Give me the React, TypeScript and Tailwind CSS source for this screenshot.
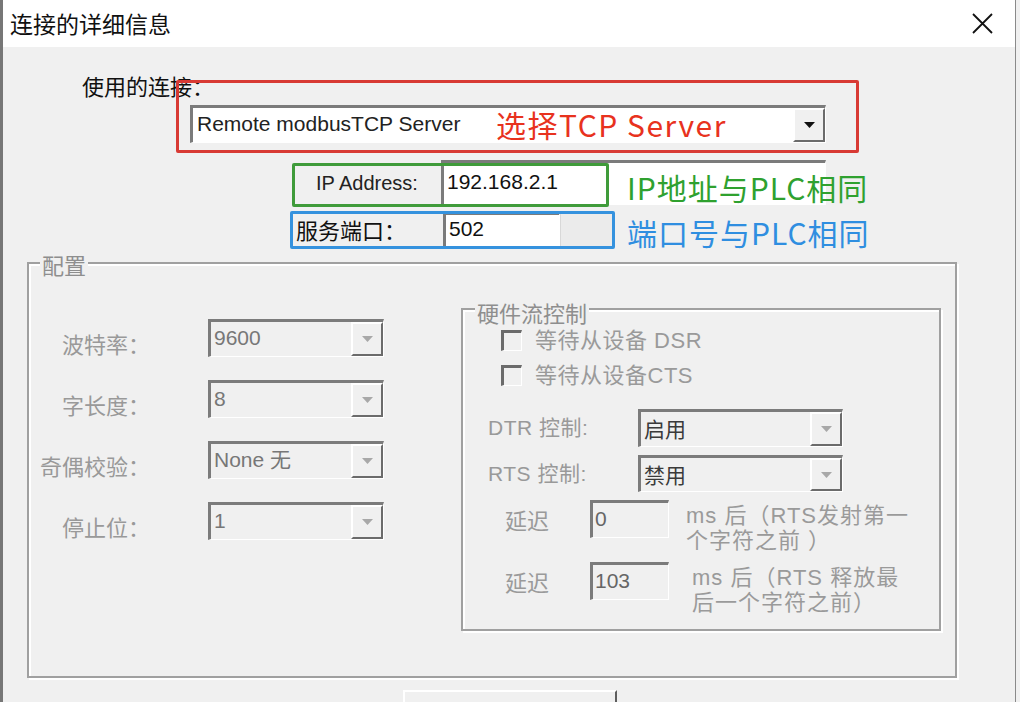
import React from 'react';

const latin = "font-['Liberation_Sans','Noto_Sans_CJK_SC',sans-serif]";

// classic sunken 3D edge used by edits and combo boxes
const sunken =
  'border-t-[3px] border-l-[3px] border-r border-b border-t-[#7b7b7b] border-l-[#7b7b7b] border-r-white border-b-white';

function Arrow({ dim }: { dim?: boolean }) {
  return (
    <div className="flex h-full w-[32px] shrink-0 items-center justify-center border-2 border-t-white border-l-white border-r-[#6b6b6b] border-b-[#6b6b6b] bg-[#f0f0f0]">
      <svg width="11" height="6" viewBox="0 0 11 6">
        <path d="M0 0 H11 L5.5 6 Z" fill={dim ? '#a8a8a8' : '#111'} />
      </svg>
    </div>
  );
}

function Combo({ text, className, textClass }: { text: string; className: string; textClass: string }) {
  return (
    <div className={`flex shrink-0 bg-[#f0f0f0] ${sunken} ${className}`}>
      <span className={`flex-1 truncate pl-[3px] text-[21px] leading-[32px] ${textClass}`}>{text}</span>
      <Arrow dim />
    </div>
  );
}

function CheckRow({ label, className }: { label: string; className?: string }) {
  return (
    <div className={`flex h-[21px] items-center pl-[38px] ${className ?? ''}`}>
      <span className="h-[21px] w-[21px] shrink-0 border-t-[3px] border-l-[3px] border-r border-b border-t-[#6b6b6b] border-l-[#6b6b6b] border-r-white border-b-white bg-[#f0f0f0]" />
      <span className={`ml-[13px] text-[22px] leading-[24px] tracking-[0.5px] text-[#9a9a9a] ${latin}`}>{label}</span>
    </div>
  );
}

function DelayRow({ value, lines, gap, className }: { value: string; lines: string[]; gap: string; className?: string }) {
  return (
    <div className={`flex items-start pl-[42px] ${className ?? ''}`}>
      <div className="flex h-[38px] items-center">
        <span className="w-[85px] text-[22px] leading-[24px] text-[#9a9a9a]">延迟</span>
        <div className={`h-[38px] w-[79px] bg-[#f0f0f0] ${sunken}`}>
          <span className={`pl-[2px] text-[21px] leading-[32px] text-[#666] ${latin}`}>{value}</span>
        </div>
      </div>
      <div className={`mt-[3px] text-[22px] leading-[25px] tracking-[1px] text-[#9a9a9a] ${latin} ${gap}`}>
        {lines.map(l => (
          <div key={l} className="whitespace-nowrap">{l}</div>
        ))}
      </div>
    </div>
  );
}

const portLabels = [
  { label: '波特率：', value: '9600' },
  { label: '字长度：', value: '8' },
  { label: '奇偶校验：', value: 'None 无' },
  { label: '停止位：', value: '1' },
];

export default function App() {
  return (
    <div className="relative flex h-[702px] w-[1020px] overflow-hidden bg-[#ececec] font-['Noto_Sans_CJK_SC',sans-serif]">
      <div className="flex w-[1016px] shrink-0 flex-col border-l-[3px] border-r border-l-[#777] border-r-[#8a8a8a] bg-[#f0f0f0]">
        {/* title bar */}
        <div className="flex h-[47px] shrink-0 items-center justify-between bg-white pl-[7px] pr-[22px]">
          <span className="text-[23px] leading-none text-[#111]">连接的详细信息</span>
          <svg width="21" height="21" viewBox="0 0 21 21">
            <path d="M1 1 L20 20 M20 1 L1 20" stroke="#111" strokeWidth="1.8" />
          </svg>
        </div>

        {/* connection */}
        <div className="ml-[79px] mt-[26px] text-[22px] leading-[24px] text-[#111]">使用的连接：</div>
        <div className={`ml-[187px] mt-[8px] flex h-[38px] w-[636px] shrink-0 bg-white ${sunken}`}>
          <span className={`flex-1 pl-[4px] text-[21px] leading-[32px] text-[#222] ${latin}`}>Remote modbusTCP Server</span>
          <Arrow />
        </div>

        {/* address */}
        <div className="ml-[310px] mt-[17px] flex h-[45px] shrink-0">
          <span className={`flex w-[128px] items-center pl-[3px] text-[20px] text-[#222] ${latin}`}>IP Address:</span>
          <div className={`w-[385px] bg-white ${sunken}`}>
            <span className={`pl-[3px] text-[21px] leading-[38px] text-[#111] ${latin}`}>192.168.2.1</span>
          </div>
        </div>
        <div className="ml-[293px] mt-[7px] flex h-[35px] shrink-0">
          <span className="flex w-[147px] items-center text-[22px] text-[#111]">服务端口：</span>
          <div className={`w-[117px] bg-white ${sunken}`}>
            <span className={`pl-[3px] text-[21px] leading-[28px] text-[#111] ${latin}`}>502</span>
          </div>
          <div className="w-[54px] border border-[#d8d8d8] bg-[#ebebeb]" />
        </div>

        {/* serial settings */}
        <div className="relative ml-[24px] mt-[15px] h-[416px] w-[930px] shrink-0 border-2 border-[#a0a0a0] shadow-[inset_2px_2px_0_#fff,2px_2px_0_#fff]">
          <span className="absolute -top-[12px] left-[11px] bg-[#f0f0f0] px-[2px] text-[22px] leading-[24px] text-[#8e8e8e]">配置</span>
          <div className="flex">
            <div className="flex flex-col gap-[23px] pt-[55px]">
              {portLabels.map(r => (
                <div key={r.label} className="flex h-[38px] items-center">
                  <span className="mt-[10px] w-[121px] text-right text-[22px] leading-[24px] text-[#999]">{r.label}</span>
                  <Combo text={r.value} className="ml-[58px] h-[38px] w-[176px]" textClass={`text-[#777] ${latin}`} />
                </div>
              ))}
            </div>

            <div className="relative ml-[77px] mt-[44px] h-[323px] w-[480px] shrink-0 border-2 border-[#a0a0a0] shadow-[inset_2px_2px_0_#fff,2px_2px_0_#fff]">
              <span className="absolute -top-[10px] left-[12px] bg-[#f0f0f0] px-[2px] text-[22px] leading-[24px] text-[#8e8e8e]">硬件流控制</span>
              <div className="flex flex-col pt-[20px]">
                <CheckRow label="等待从设备 DSR" />
                <CheckRow label="等待从设备CTS" className="mt-[14px]" />
                <div className="mt-[23px] flex h-[38px] items-center pl-[25px]">
                  <span className={`w-[150px] text-[21px] tracking-[0.5px] text-[#999] ${latin}`}>DTR 控制:</span>
                  <Combo text="启用" className="h-[38px] w-[205px]" textClass="text-[#3a3a3a]" />
                </div>
                <div className="mt-[8px] flex h-[37px] items-center pl-[25px]">
                  <span className={`w-[150px] text-[21px] tracking-[0.5px] text-[#999] ${latin}`}>RTS 控制:</span>
                  <Combo text="禁用" className="h-[37px] w-[205px]" textClass="text-[#3a3a3a]" />
                </div>
                <DelayRow className="mt-[8px]" value="0" gap="ml-[17px]" lines={['ms 后（RTS发射第一', '个字符之前 ）']} />
                <DelayRow className="mt-[9px]" value="103" gap="ml-[23px]" lines={['ms 后（RTS 释放最', '后一个字符之前）']} />
              </div>
            </div>
          </div>
        </div>

        {/* button edge peeking in at the bottom */}
        <div className="ml-[400px] mt-[12px] h-[30px] w-[214px] shrink-0 border-2 border-t-white border-l-white border-r-[#5e5e5e] border-b-[#5e5e5e] bg-[#f0f0f0]" />
      </div>
      <div className="flex-1 bg-[#f0f0f0]" />

      {/* annotations drawn over the dialog */}
      <div className="pointer-events-none absolute left-[176px] top-[80px] h-[73px] w-[683px] rounded-[2px] border-[3px] border-[#d83a34]" />
      <span className="absolute left-[496px] top-[104px] text-[30px] leading-[40px] tracking-[1.5px] text-[#e8321e]">选择TCP Server</span>
      <div className="pointer-events-none absolute left-[292px] top-[163px] h-[44px] w-[317px] rounded-[2px] border-[3px] border-[#3f9b3a]" />
      <span className="absolute left-[627px] top-[167px] text-[30px] leading-[40px] tracking-[1px] text-[#2fa12f]">IP地址与PLC相同</span>
      <div className="pointer-events-none absolute left-[290px] top-[211px] h-[38px] w-[325px] rounded-[2px] border-[3px] border-[#3592de]" />
      <span className="absolute left-[627px] top-[212px] text-[30px] leading-[40px] tracking-[1px] text-[#2f8ee0]">端口号与PLC相同</span>
    </div>
  );
}
